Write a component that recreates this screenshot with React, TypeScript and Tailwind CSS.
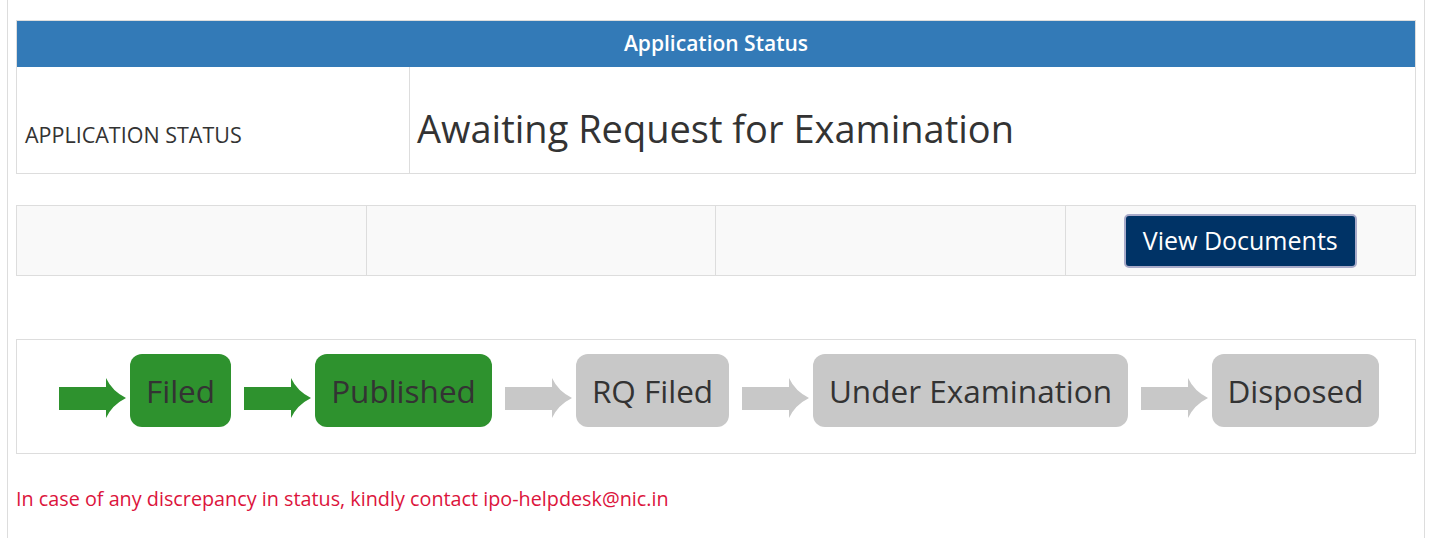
const font = { fontFamily: '"Open Sans", "Noto Sans", Arial, sans-serif' };

type Step = { label: string; width: string; done: boolean };

const steps: Step[] = [
  { label: "Filed", width: "w-[101px]", done: true },
  { label: "Published", width: "w-[177px]", done: true },
  { label: "RQ Filed", width: "w-[153px]", done: false },
  { label: "Under Examination", width: "w-[315px]", done: false },
  { label: "Disposed", width: "w-[167px]", done: false },
];

function Arrow({ done }: { done: boolean }) {
  return (
    <svg
      width="67"
      height="40"
      viewBox="0 0 67 40"
      className={done ? "fill-[#2e922e]" : "fill-[#c8c8c8]"}
    >
      <path d="M0 9 H47 V0 Q53 13 67 20 Q53 27 47 40 V32 H0 Z" />
    </svg>
  );
}

export default function App() {
  return (
    <div className="bg-white min-h-[538px]" style={font}>
      <div className="ml-[7px] w-[1418px] min-h-[538px] border-x border-[#dddddd] px-2 pt-5 text-[#333333]">
        {/* status table */}
        <div className="border border-[#dddddd]">
          <div className="h-[46px] bg-[#337ab7] text-white text-[21px] font-semibold flex items-center justify-center">
            Application Status
          </div>
          <div className="grid grid-cols-[393px_1fr] h-[106px]">
            <div className="border-r border-[#dddddd] flex items-end pl-2 pb-[28px] text-[21.5px] leading-none">
              APPLICATION STATUS
            </div>
            <div className="flex items-end pl-[7px] pb-[26px] text-[38px] leading-none">
              Awaiting Request for Examination
            </div>
          </div>
        </div>

        {/* documents row */}
        <div className="mt-[31px] grid grid-cols-4 h-[71px] border border-[#dddddd] bg-[#f9f9f9]">
          <div className="border-r border-[#dddddd]"></div>
          <div className="border-r border-[#dddddd]"></div>
          <div className="border-r border-[#dddddd]"></div>
          <div className="flex items-center justify-center">
            <button className="w-[233px] h-[54px] rounded-[5px] border-2 border-[#a9abc9] bg-[#003366] text-white text-[25px]">
              View Documents
            </button>
          </div>
        </div>

        {/* progress */}
        <div className="mt-[63px] h-[115px] border border-[#dddddd] pl-[42px] pt-[14px] flex items-start">
          {steps.map((s, i) => (
            <div key={s.label} className={"flex items-start " + (i > 0 ? "ml-[13px]" : "")}>
              <div className="mt-[24px] mr-1">
                <Arrow done={s.done} />
              </div>
              <div
                className={
                  "h-[73px] rounded-[12px] flex items-center justify-center text-[31.5px] text-[#333333] " +
                  s.width +
                  " " +
                  (s.done ? "bg-[#2e922e]" : "bg-[#c8c8c8]")
                }
              >
                {s.label}
              </div>
            </div>
          ))}
        </div>

        <div className="mt-[35px] text-[19.8px] leading-none text-[#dc143c]">
          In case of any discrepancy in status, kindly contact ipo-helpdesk@nic.in
        </div>
      </div>
    </div>
  );
}
